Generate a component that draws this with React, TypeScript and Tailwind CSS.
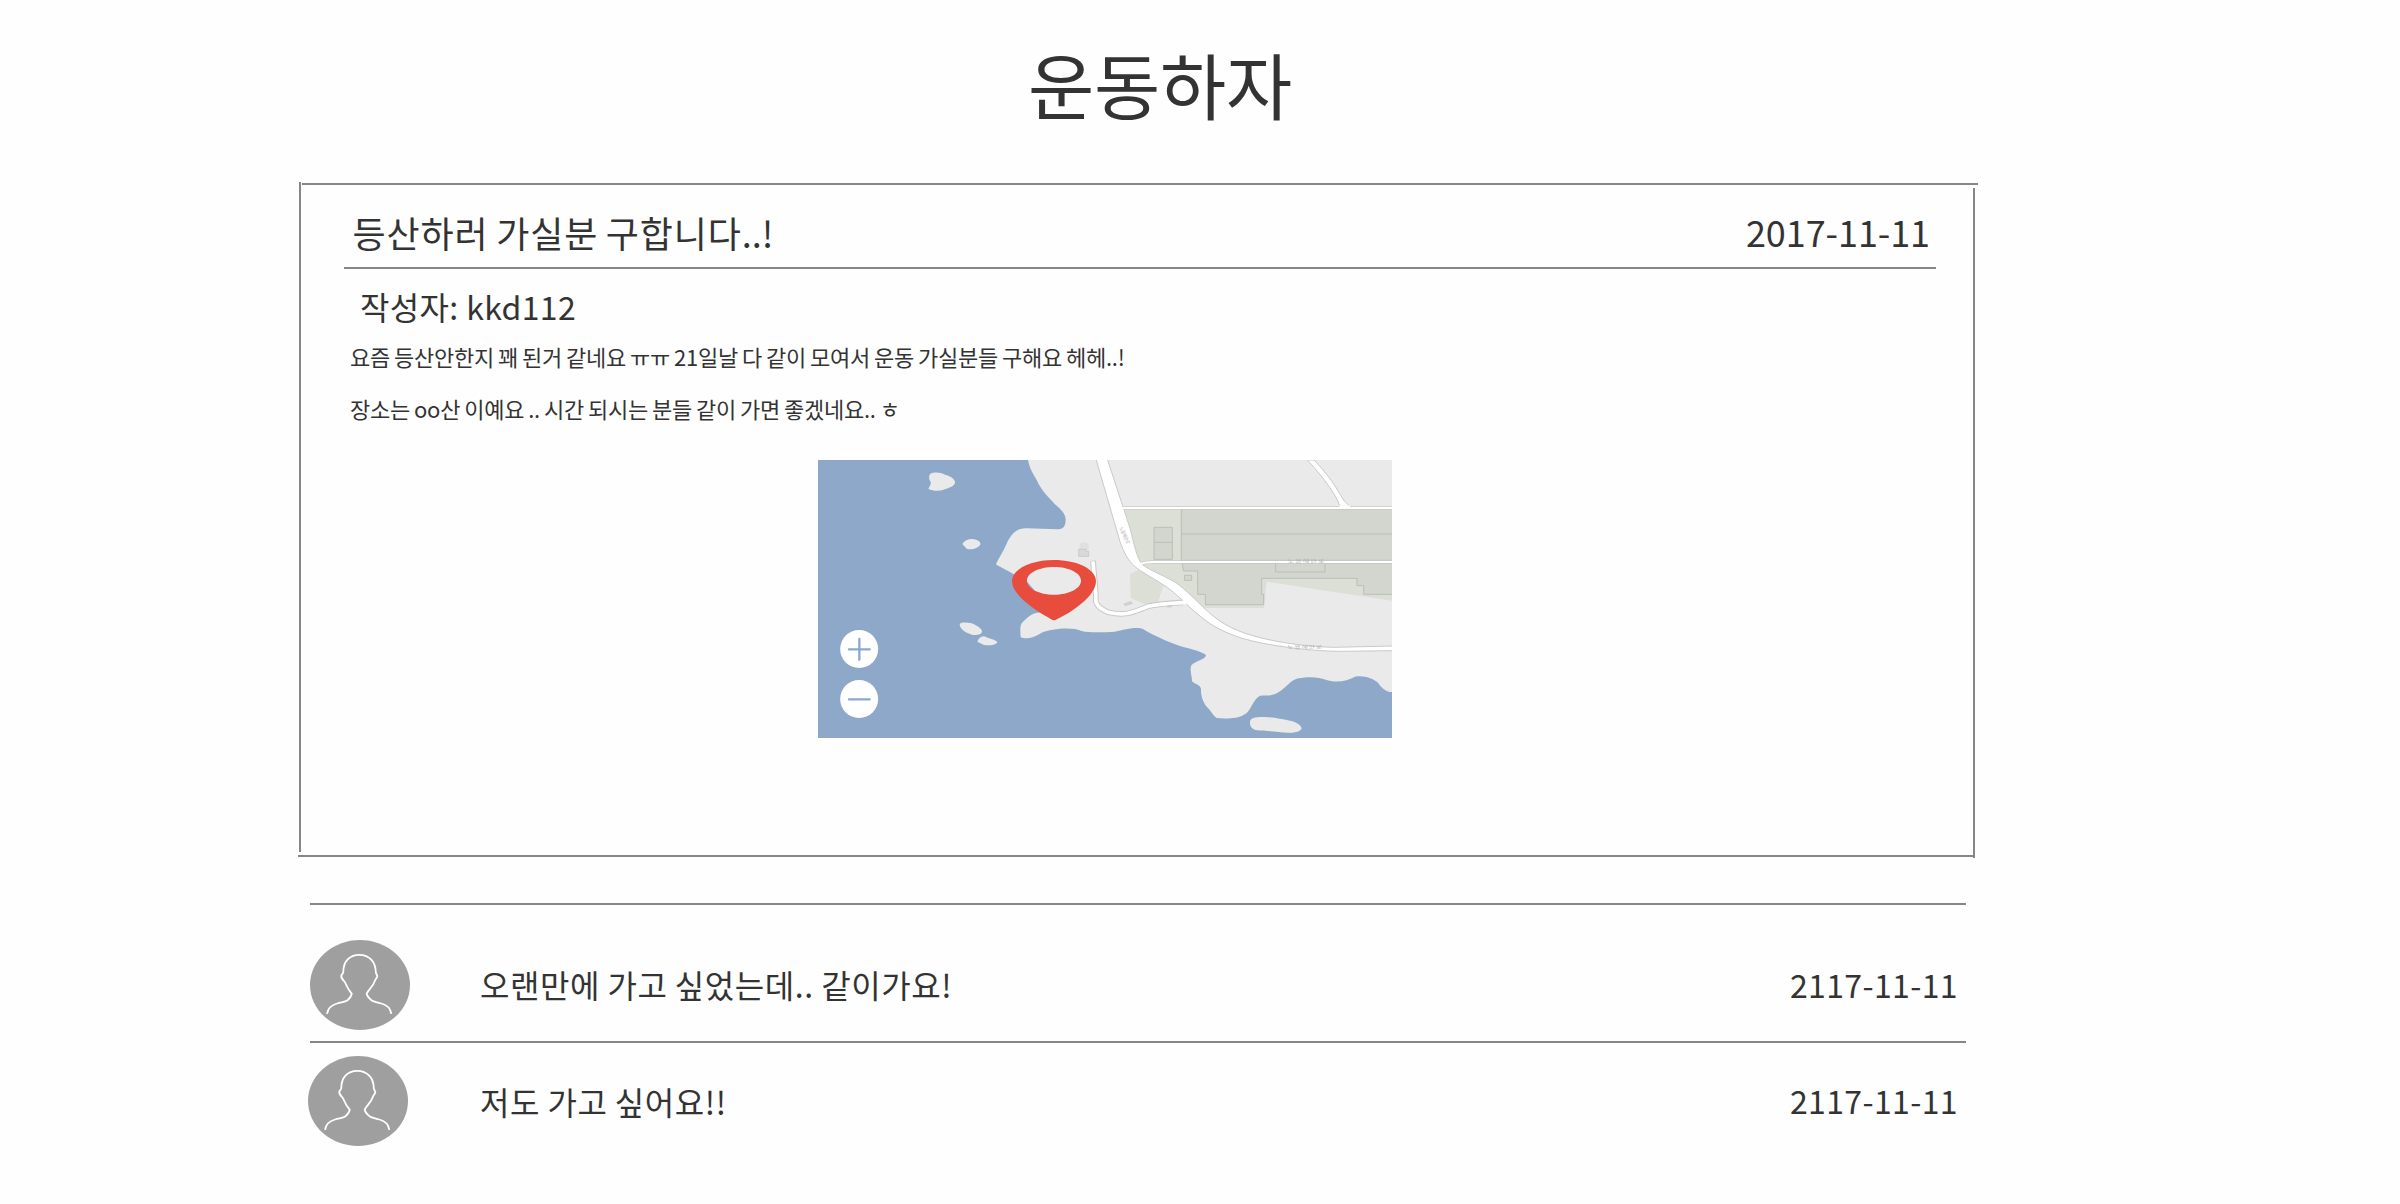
import React from "react";

function Avatar() {
  return (
    <svg className="h-[90px] w-[100px] shrink-0" viewBox="0 0 100 90" fill="none">
      <ellipse cx="50" cy="45" rx="50" ry="45" fill="#9f9f9f" />
      <path
        d="M17 73.800C18 68 21.500 65 27 63.500C32 62 35 62 37.500 60.200C39.500 58.500 41.500 56 41.700 53.600C39.500 51 37.500 48 36.300 45C35 42 34.500 41 33.500 40.500C32.500 39.500 30.700 37 31.500 35C32 34 33.300 33.500 33.300 32C33.300 22 39 14.800 49.300 14.800C59.500 14.800 65.500 22 65.800 32C65.800 33.500 67.300 35 67.300 36.500C67 38 65.500 39 64.800 41C63 47 58 50 56.700 53.600C57 56 59.500 58.500 61.500 60.200C64 62 67 62 71.500 63.500C77 65 80.500 68 81.300 73.800"
        stroke="#fff"
        strokeWidth="1.8"
      />
    </svg>
  );
}

function MapView() {
  return (
    <svg className="block h-[278px] w-[574px]" viewBox="24 30 1722 834" fill="none">
      <rect x="24" y="30" width="1722" height="834" fill="#8ea8ca" />
      {/* land */}
      <path
        d="M654 30C660 60 672 75 680 90C695 125 720 145 734 162C752 177 768 192 767 210C766 228 762 238 740 238L650 235C615 234 600 258 588 285C580 305 565 325 558 343C570 352 595 362 610 372L650 394L676 424L700 488C665 484 650 505 635 520C629 530 631 545 632 562C650 569 675 562 695 548C725 535 790 530 815 543C840 549 880 547 915 545C945 538 985 528 1000 538C1030 556 1065 572 1110 588C1145 597 1180 607 1188 615C1186 630 1160 630 1144 646C1138 660 1146 675 1146 694C1156 704 1172 704 1173 718C1172 745 1184 760 1188 768C1200 778 1210 798 1220 804C1245 807 1285 806 1300 795C1325 785 1325 750 1350 737C1370 736 1385 738 1400 730C1425 718 1440 690 1465 685C1500 678 1530 682 1550 690C1585 700 1610 692 1635 680C1660 675 1690 685 1704 698C1715 715 1730 726 1746 726V30Z"
        fill="#eaeaea"
      />
      <g fill="#eaeaea">
        <path d="M360 72C375 64 395 68 407 75C425 79 437 90 435 100C430 112 410 115 397 121C380 124 365 122 355 116C360 108 364 100 362 96C356 88 356 80 360 72Z" />
        <path d="M457 282C465 268 485 264 500 270C514 276 514 284 505 290C492 298 480 299 470 296Z" />
        <path d="M449 523C450 516 470 517 485 520C500 526 516 536 516 545C514 555 500 556 485 554C468 548 450 540 449 523Z" />
        <path d="M502 575C506 562 518 555 528 561C540 567 562 570 562 578C552 586 535 588 520 584Z" />
        <path d="M1320 820C1318 804 1332 801 1360 801C1380 800 1410 806 1440 812C1460 816 1474 826 1475 836C1465 850 1435 850 1405 846C1375 842 1355 844 1337 840C1324 836 1321 830 1320 820Z" />
      </g>
      {/* airfield grounds */}
      <path d="M940 180H1746V452L1370 395L1362 474H1182L1110 415L990 340Z" fill="#dcdfd6" />
      <path d="M960 372L1000 352L1062 402L1042 462L1015 468L962 443Z" fill="#dcdfd6" />
      <g fill="#d3d6cf" stroke="#bbbeb8" strokeWidth="3">
        <path d="M1114 176H1748V331H1114ZM1114 252H1748" />
        <path d="M1032 232H1087V328H1032ZM1032 277H1087" />
        <path d="M1116 340H1748V433H1661V407H1641V385H1355V433H1361V464H1186V433H1163V363H1121Z" />
        <path d="M1397 338H1545V366H1397Z" />
        <path d="M1124 376H1145V391H1124Z" />
      </g>
      <g stroke="#c5c5c5" strokeWidth="2.5">
        <path d="M810 280L830 277L836 285V300H808Z" fill="#e0e0e0" stroke="none" />
        <path d="M806 298H828V304H836V319H806Z" fill="#d9d9d9" />
        <path d="M942 462L962 455L967 460L946 467Z" fill="#d9d9d9" />
        <path d="M1072 464H1084V471H1072Z" fill="#d9d9d9" />
      </g>
      {/* road casings, then road surfaces */}
      <g stroke="#c9c9c9">
        <path d="M849 332L858 440C852 466 875 478 895 487C950 500 970 485 1015 469C1050 460 1080 460 1120 457" strokeWidth="17" />
        <path d="M932 174H1748" strokeWidth="11" />
        <path d="M990 342C1005 337 1015 336 1030 336H1748" strokeWidth="10" />
      </g>
      <path d="M1492 30C1520 60 1572 120 1590 168H1620C1590 150 1590 110 1512 30Z" fill="#fff" stroke="#c9c9c9" strokeWidth="3" />
      <path
        d="M857 24L930 275C942 310 955 332 975 350C1010 378 1060 397 1108 442C1140 473 1180 510 1215 530C1270 562 1330 576 1400 587C1480 600 1550 604 1600 604L1748 602V588L1570 592C1500 590 1420 580 1350 563C1280 545 1240 525 1200 490C1160 455 1130 420 1095 396C1050 372 1020 360 997 344C980 325 972 280 960 235L891 24Z"
        fill="#fff"
        stroke="#c9c9c9"
        strokeWidth="3"
      />
      <g stroke="#fff">
        <path d="M849 334L858 440C852 466 875 478 895 487C950 500 970 485 1015 469C1050 460 1080 460 1130 457" strokeWidth="11" />
        <path d="M936 174H1748" strokeWidth="6" />
        <path d="M990 342C1005 337 1015 336 1030 336H1748" strokeWidth="6" />
        <path d="M1588 169H1620" strokeWidth="6" />
      </g>
      {/* road names */}
      <g fill="#b0b0b0" fontSize="12">
        <text transform="translate(1432 340) scale(1.9 1)" textLength="59">노을해안로</text>
        <text transform="translate(1432 596) scale(1.8 1)" textLength="58">노을해안로</text>
        <text transform="translate(928 234) rotate(66) scale(1 1.3)" textLength="54">노을해안로</text>
      </g>
      {/* pin */}
      <path
        fillRule="evenodd"
        d="M732 330C802 330 858 358 858 393C858 440 780 490 738 509Q732 512 726 509C680 485 606 436 606 393C606 358 662 330 732 330ZM732 351C687 351 651 369 651 392C651 415 687 434 732 434C777 434 813 415 813 392C813 369 777 351 732 351Z"
        fill="#e84c3d"
      />
      {/* zoom buttons */}
      <circle cx="147.500" cy="597" r="57" fill="#fff" />
      <circle cx="147.500" cy="747" r="57" fill="#fff" />
      <path d="M117 598H179M148 567V629M117 748H179" stroke="#8ea8ca" strokeWidth="7" strokeLinecap="round" />
    </svg>
  );
}

export default function App() {
  return (
    <div className="h-[1204px] w-[2400px] overflow-hidden bg-[#fefefe] font-['Noto_Sans_CJK_KR',sans-serif] text-[#333]">
      <h1 className="ml-[1028px] pt-[30px] text-[72px] leading-[106px] tracking-[-0.24px] whitespace-nowrap">운동하자</h1>
      <section className="mt-[46px] ml-[299px] flex h-[676px] w-[1676px]">
        <div className="h-[670px] w-[2px] bg-[#868686]" />
        <div className="flex w-[1672px] flex-col">
          <div className="mt-px -mr-[5px] ml-px h-[2px] shrink-0 bg-[#868686]" />
          <div className="ml-[43px] flex h-[82px] w-[1592px] items-center justify-between pt-[12px] pr-[6px] pl-[8.5px] text-[36px] whitespace-nowrap">
            <h2 className="tracking-[0.88px] [word-spacing:-1.3px]">
              등산하러 가실분 구합니다<span className="tracking-normal">..!</span>
            </h2>
            <span className="-mt-[2px] tracking-[-0.08px]">2017-11-11</span>
          </div>
          <div className="ml-[43px] h-[2px] w-[1592px] shrink-0 bg-[#868686]" />
          <p className="mt-[13px] ml-[59px] text-[32px] leading-[48px] tracking-[0.35px]">작성자: kkd112</p>
          <p className="mt-[10px] ml-[49px] text-[22px] leading-[32px] tracking-[-0.24px] [word-spacing:-0.69px]">
            요즘 등산안한지 꽤 된거 같네요 ㅠㅠ 21일날 다 같이 모여서 운동 가실분들 구해요 헤헤..!
          </p>
          <p className="mt-[20px] ml-[49px] text-[22px] leading-[32px] tracking-[-0.24px] [word-spacing:-0.69px]">
            장소는 oo산 이예요 .. 시간 되시는 분들 같이 가면 좋겠네요.. ㅎ
          </p>
          <div className="mt-[36px] ml-[517px]">
            <MapView />
          </div>
          <div className="mt-auto mb-px -ml-[3px] h-[2px] shrink-0 bg-[#868686]" />
        </div>
        <div className="mt-[6px] w-[2px] bg-[#868686]" />
      </section>
      <section className="mt-[45px] ml-[308px] w-[1658px]">
        <div className="ml-[2px] h-[2px] bg-[#868686]" />
        <div className="flex h-[136px] items-center pt-[24px] pl-[2px]">
          <Avatar />
          <div className="ml-[70px] flex flex-1 justify-between pr-[8px] pb-[2px] text-[32px]">
            <p className="tracking-[0.56px] [word-spacing:-0.3px]">오랜만에 가고 싶었는데.. 같이가요!</p>
            <span className="tracking-[0.38px]">2117-11-11</span>
          </div>
        </div>
        <div className="ml-[2px] h-[2px] bg-[#868686]" />
        <div className="flex h-[116px] items-center">
          <Avatar />
          <div className="ml-[72px] flex flex-1 justify-between pr-[8px] text-[32px]">
            <p className="tracking-[0.56px] [word-spacing:-0.3px]">저도 가고 싶어요!!</p>
            <span className="-mt-px tracking-[0.38px]">2117-11-11</span>
          </div>
        </div>
      </section>
    </div>
  );
}
